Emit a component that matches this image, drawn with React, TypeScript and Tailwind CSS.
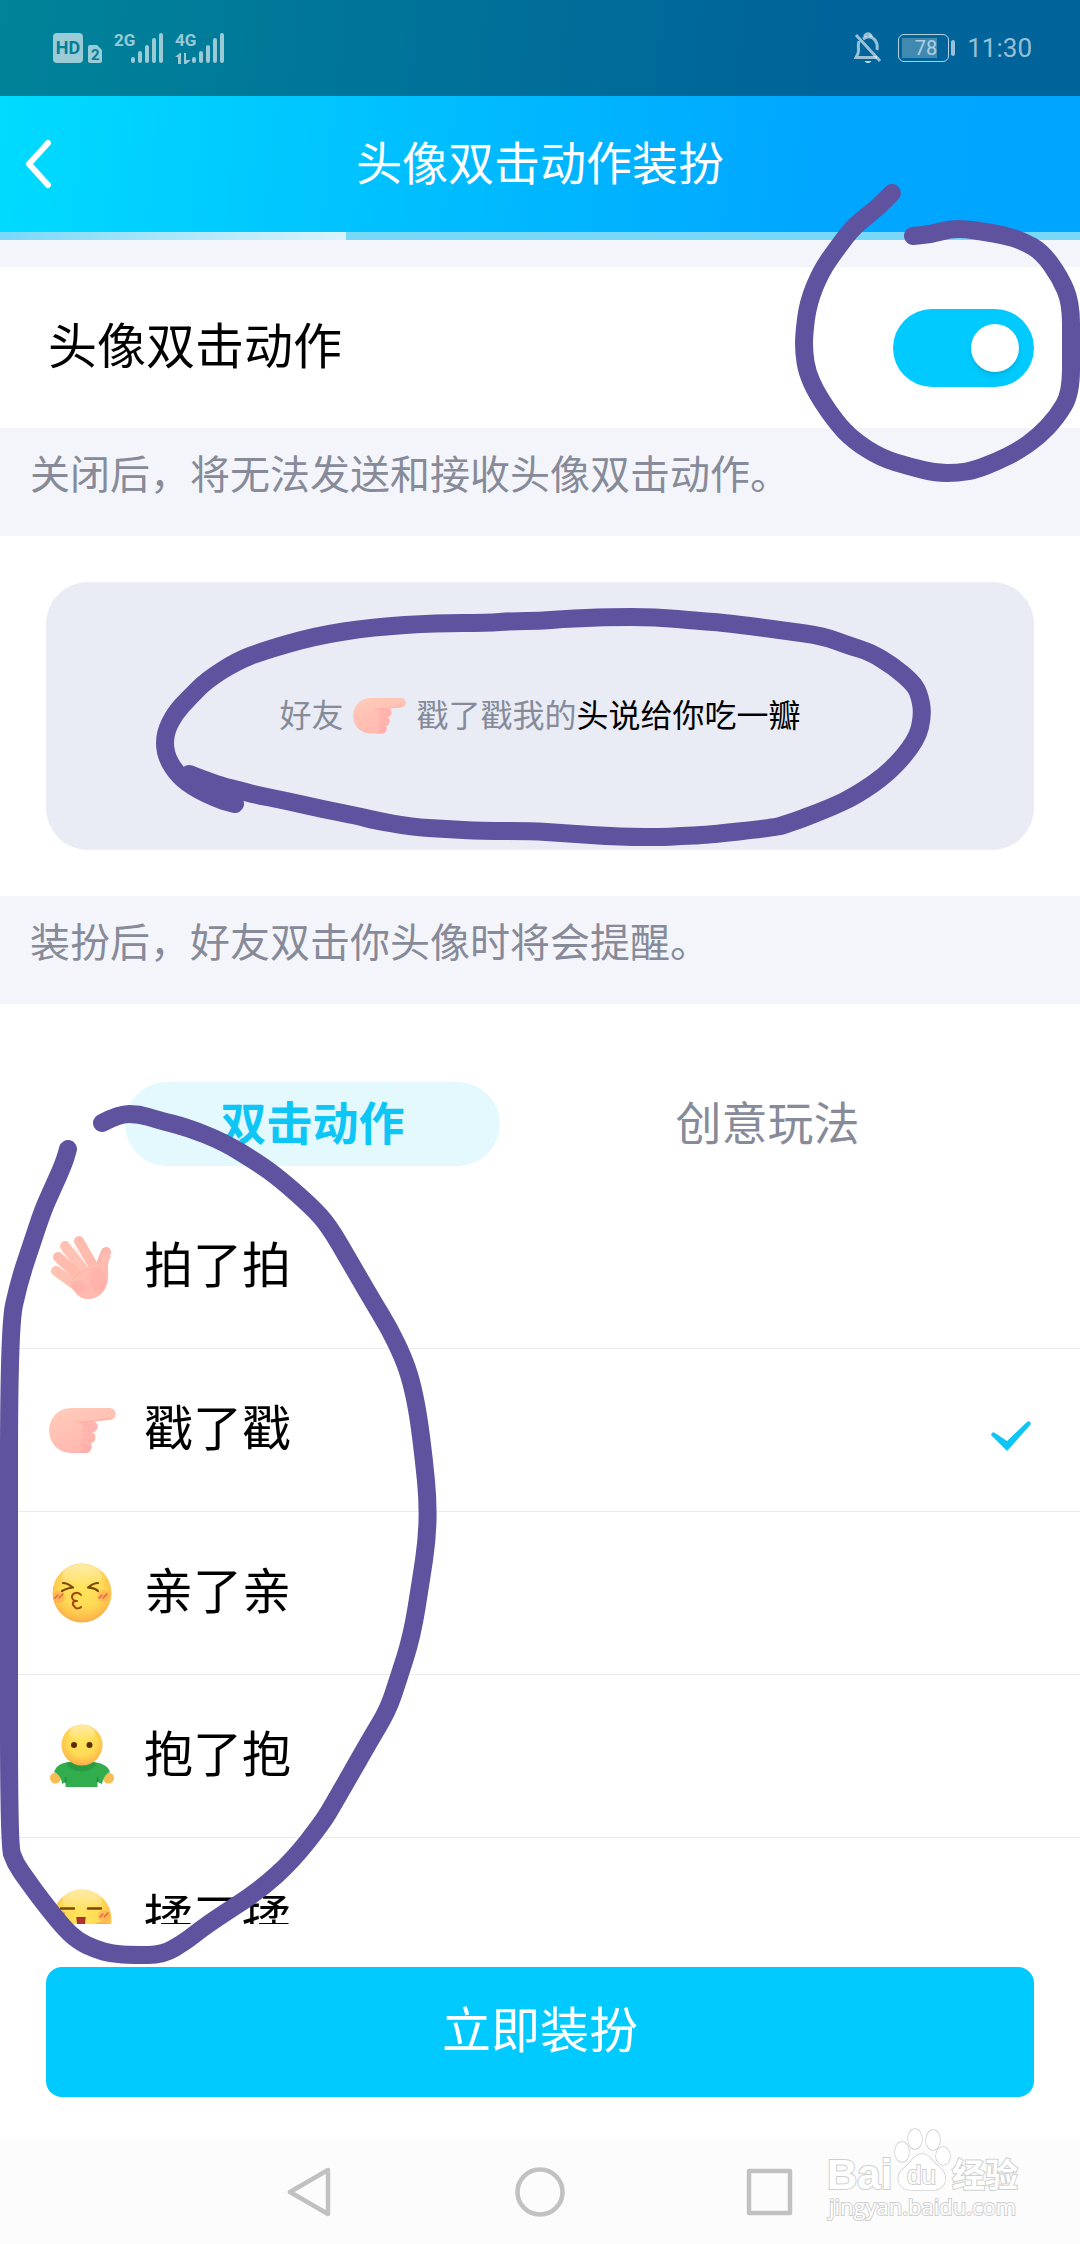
import { FC, ReactNode, useState } from "react";

const WaveHand: FC = () => (
  <svg viewBox="0 0 64 64" className="w-16 h-16" aria-hidden="true">
    <defs>
      <linearGradient id="wave" x1="0" y1="0" x2="1" y2="1">
        <stop offset="0" stopColor="#ffc4b2" />
        <stop offset="0.5" stopColor="#ffbcb0" />
        <stop offset="1" stopColor="#ffb3ac" />
      </linearGradient>
    </defs>
    <g strokeWidth="10" strokeLinecap="round" fill="none">
      <path d="M56 17 50 32" stroke="#fdb4aa" />
      <path d="M29 6 45 34" stroke="#ffbcae" />
      <path d="M15 11 36 38" stroke="#ffc1b1" />
      <path d="M8 22 32 44" stroke="#ffbcae" />
      <path d="M6 36 28 52" stroke="#ffc1b1" />
    </g>
    <path
      d="M20 50C24 41 31 36 41 31L47 30C51 28 51 21 54 16L61 22C56 28 59 36 58 43C57 57 48 64 38 64C29 64 25 58 20 50Z"
      fill="url(#wave)"
    />
    <ellipse cx="29" cy="52" rx="8" ry="6" fill="#ffa79f" opacity="0.4" transform="rotate(30 29 52)" />
    <ellipse cx="48" cy="45" rx="8" ry="12" fill="#ffa79f" opacity="0.3" />
    <path d="M22 45C28 37 34 36 43 34" stroke="#ffa89c" strokeWidth="1" fill="none" opacity="0.6" />
    <path d="M12 16l15 19M7 28l16 15M24 11l12 20" stroke="#ffa89c" strokeWidth="1" opacity="0.4" />
  </svg>
);

const PokeHand: FC<{ className: string }> = ({ className }) => (
  <svg viewBox="0 0 67 45" className={className} aria-hidden="true">
    <defs>
      <linearGradient id="poke" x1="0" y1="0" x2="0.5" y2="1">
        <stop offset="0" stopColor="#ffccb9" />
        <stop offset="1" stopColor="#ffb8b0" />
      </linearGradient>
    </defs>
    <path
      d="M22 0H60.500A6 6 0 0 1 61 12L43 13.500C50 13 51 23 43.500 24.500C48 26 47.500 34 42 35.500C44 38 42 45 37 45H22C-7 44 -7 1 22 0Z"
      fill="url(#poke)"
    />
    <path d="M44 13C50 14 50 23 43 24.500C38 25 34 24 31 23C36 22 34 15 29 13Z" fill="#ffaaa8" opacity="0.55" />
    <path d="M43 25C48 28 46 34 41 35.500C37 36 34 35 31 34C35 32 35 27 30 25Z" fill="#ffaaa8" opacity="0.45" />
    <path d="M41 36C44 40 41 45 37 45H28C34 43 36 39 31 36Z" fill="#ffa5a5" opacity="0.5" />
    <path d="M26 14C35 14 48 13 62 10" stroke="#ffab9f" strokeWidth="1.500" fill="none" opacity="0.5" />
  </svg>
);

const FaceGradient: FC<{ id: string }> = ({ id }) => (
  <defs>
    <radialGradient id={id} cx="0.5" cy="0.4" r="0.62">
      <stop offset="0" stopColor="#ffe45c" />
      <stop offset="0.55" stopColor="#ffdb55" />
      <stop offset="0.85" stopColor="#fdbd4b" />
      <stop offset="1" stopColor="#f9a646" />
    </radialGradient>
    <linearGradient id={`${id}-shine`} x1="0" y1="0" x2="0" y2="1">
      <stop offset="0" stopColor="#fff" stopOpacity="0.5" />
      <stop offset="1" stopColor="#fff" stopOpacity="0" />
    </linearGradient>
  </defs>
);

const KissFace: FC = () => (
  <svg viewBox="0 0 60 60" className="w-15 h-15" aria-hidden="true">
    <FaceGradient id="kiss" />
    <circle cx="30" cy="30" r="29.500" fill="url(#kiss)" />
    <ellipse cx="30" cy="13" rx="20" ry="12" fill="url(#kiss-shine)" />
    <circle cx="7" cy="34" r="6" fill="#fb8f55" opacity="0.35" />
    <circle cx="51" cy="33" r="6" fill="#fb8f55" opacity="0.35" />
    <g fill="none" strokeLinecap="round" strokeLinejoin="round">
      <path d="M11 20C15 20 18 22 21 24.500C17 25 13 26 10 28M46 20C42 20 39 22 36 24.500C40 25 43 25 46 28" stroke="#7a4708" strokeWidth="2.200" />
      <path d="M29 32C26 28 20 30 20 34C20 37 23 38 25 38C20 38 20 41 22 43C24 47 28 45 29 44" stroke="#a5450a" strokeWidth="2" />
      <path d="M3 35l3-3M7 35l4-4M47 35l3-3M51 35l4-4" stroke="#e8553d" strokeWidth="1.200" />
    </g>
  </svg>
);

const HugPerson: FC = () => (
  <svg viewBox="0 0 64 64" className="w-16 h-16" aria-hidden="true">
    <FaceGradient id="hug" />
    <circle cx="5.500" cy="54" r="5.500" fill="#f8bd52" />
    <circle cx="58.500" cy="54" r="5.500" fill="#f8bd52" />
    <path d="M18 38C12 39 8 41 6 44L4 48C9 50 12 55 12 60L15.500 58V63H47.500V58L52 60C53 55 55 50 60 48L58 44C55 41 51 39 44 38Z" fill="#31ad4e" />
    <path d="M15.500 59V53M47.500 58V53" stroke="#1f8f40" strokeWidth="1.500" />
    <path d="M16 40C24 50 39 50 47 40L44 38H19Z" fill="#258f40" opacity="0.6" />
    <circle cx="32" cy="21" r="20.500" fill="url(#hug)" />
    <ellipse cx="32" cy="9" rx="13" ry="8" fill="url(#hug-shine)" />
    <circle cx="24" cy="21" r="3" fill="#5b2b06" />
    <circle cx="39.500" cy="21" r="3" fill="#5b2b06" />
  </svg>
);

const RubFace: FC = () => (
  <svg viewBox="0 0 60 60" className="w-15 h-15" aria-hidden="true">
    <FaceGradient id="rub" />
    <circle cx="30" cy="30" r="29.500" fill="url(#rub)" />
    <ellipse cx="30" cy="12" rx="20" ry="11" fill="url(#rub-shine)" />
    <circle cx="8" cy="27" r="6" fill="#fb8f55" opacity="0.35" />
    <circle cx="52" cy="27" r="6" fill="#fb8f55" opacity="0.35" />
    <path d="M9 19.500H22M36 19.500H49" stroke="#7a4708" strokeWidth="2.400" strokeLinecap="round" />
    <path d="M25 28.500H33L32 38H26Z" fill="#b92f35" stroke="#8a3a14" strokeWidth="1.200" />
    <path d="M4 28l3-3M8 28l4-4M48 28l3-3M52 28l4-4" stroke="#e8553d" strokeWidth="1.200" strokeLinecap="round" />
    <ellipse cx="50" cy="38" rx="9" ry="5" fill="#fbb04a" />
  </svg>
);

const actions: { id: string; name: string; icon: ReactNode }[] = [
  { id: "pat", name: "拍了拍", icon: <WaveHand /> },
  { id: "poke", name: "戳了戳", icon: <PokeHand className="w-[67px]" /> },
  { id: "kiss", name: "亲了亲", icon: <KissFace /> },
  { id: "hug", name: "抱了抱", icon: <HugPerson /> },
  { id: "rub", name: "揉了揉", icon: <RubFace /> },
];

const Signal: FC<{ label: string; data?: boolean }> = ({ label, data }) => (
  <svg viewBox="0 0 52 32" className="h-8 w-[52px] overflow-visible" fill="currentColor">
    <text x="0" y="14" className="font-['Roboto',sans-serif] text-[17px] font-bold">
      {label}
    </text>
    {data && <path d="M0 25l5-4h1v11H3v-7zM9 21h2v7h5l-5 4H9z" />}
    <rect x="17" y="25" width="4" height="6" rx="2" />
    <rect x="24" y="19" width="4" height="12" rx="2" />
    <rect x="31" y="13" width="4" height="18" rx="2" />
    <rect x="38" y="6" width="4" height="25" rx="2" />
    <rect x="45" y="1" width="4" height="30" rx="2" />
  </svg>
);

const StatusBar: FC = () => (
  <div className="h-24 pl-[53px] pr-12 flex items-center justify-between bg-black/40 text-white/60">
    <div className="flex items-center">
      <span className="w-[30px] h-[30px] rounded-sm bg-white/60 text-[#067d97] text-lg font-bold font-['Roboto',sans-serif] flex items-center justify-center">
        HD
      </span>
      <svg viewBox="0 0 14 18" className="w-[14px] h-[18px] ml-[5px] mt-3" fill="currentColor">
        <path d="M2 0H9L14 5V16Q14 18 12 18H2Q0 18 0 16V2Q0 0 2 0Z" />
        <text x="3" y="15" className="font-['Roboto',sans-serif] text-[15px] font-bold" fill="#067d97">
          2
        </text>
      </svg>
      <div className="flex gap-[9px] ml-3">
        <Signal label="2G" />
        <Signal label="4G" data />
      </div>
    </div>
    <div className="flex items-center">
      <svg viewBox="0 0 28 32" className="w-7 h-8" fill="none" stroke="currentColor" strokeWidth="3">
        <path d="M5 9Q4 13 4.500 17Q5 21 2 25.500H23M9 7Q16 2 21 8Q24 12 23 18" />
        <path d="M11 5V3.500Q14 0 17 3.500V5M2 3L26 29" />
        <path d="M11 29.500Q14 32 17 29.500Z" fill="currentColor" strokeWidth="1" />
      </svg>
      <div className="ml-4 w-[51px] h-7 p-[3px] border border-white/70 rounded-md">
        <div className="w-[35px] h-full bg-white/25 text-xl leading-5 text-right">78</div>
      </div>
      <div className="ml-0.5 w-1 h-4 rounded-sm bg-white/60" />
      <time className="ml-3 text-[26px]">11:30</time>
    </div>
  </div>
);

const Header: FC = () => (
  <header className="shrink-0 bg-[linear-gradient(96deg,#00dcff_0%,#00beff_40%,#00a6ff_76%,#00a5ff_100%)]">
    <StatusBar />
    <div className="h-[136px] px-6 grid grid-cols-[1fr_auto_1fr] items-center text-white">
      <button type="button" aria-label="返回" className="w-8">
        <svg viewBox="0 0 32 50" className="w-8" fill="none" stroke="currentColor" strokeWidth="6" strokeLinecap="round" strokeLinejoin="round">
          <path d="M24 4 5 25 24 46" />
        </svg>
      </button>
      <h1 className="text-[46px]">头像双击动作装扮</h1>
    </div>
  </header>
);

const Note: FC<{ children: ReactNode }> = ({ children }) => (
  <p className="h-[108px] shrink-0 px-[30px] pt-5 bg-[#f4f5fa] text-[#878b99] text-[40px] leading-14">
    {children}
  </p>
);

// Points of each pen stroke, in page units.
const strokes: number[][][] = [
  [
    [892, 193], [880, 206], [854, 226], [838, 247], [821, 271], [808, 303], [804, 335], [804, 352], [807, 372], [817, 394],
    [836, 422], [853, 440], [881, 458], [911, 467], [936, 473], [958, 473], [975, 470], [998, 461], [1018, 451], [1038, 437],
    [1057, 417], [1071, 393], [1071, 345], [1071, 303], [1060, 277], [1042, 252], [1023, 241], [1003, 235], [985, 232], [966, 229],
    [950, 229], [932, 234], [913, 236],
  ],
  [
    [189, 774], [217, 785], [235, 789], [252, 794], [287, 801], [322, 809], [358, 816], [373, 820], [412, 827], [445, 829],
    [482, 831], [532, 831], [560, 833], [622, 837], [667, 837], [680, 836], [707, 835], [770, 828], [785, 825], [830, 808],
    [857, 795], [890, 772], [917, 740], [923, 714], [919, 693], [912, 682], [893, 666], [870, 652], [850, 646], [823, 636],
    [787, 631], [727, 623], [700, 621], [655, 617], [608, 617], [587, 618], [562, 619], [540, 621], [513, 621], [487, 623],
    [437, 623], [373, 627], [315, 636], [263, 651], [237, 661], [207, 680], [190, 697], [175, 713], [165, 733], [165, 753],
    [175, 772], [192, 787], [220, 800], [235, 804],
  ],
  [
    [102, 1123], [119, 1114], [139, 1114], [158, 1120], [186, 1127], [224, 1142], [258, 1163], [279, 1178], [312, 1207], [329, 1226],
    [350, 1262], [372, 1300], [389, 1328], [403, 1357], [411, 1380], [418, 1413], [424, 1460], [428, 1502], [427, 1540], [421, 1580],
    [412, 1636], [398, 1680], [388, 1710], [370, 1740], [333, 1805], [322, 1823], [293, 1860], [260, 1890], [217, 1918], [200, 1930],
    [186, 1941], [163, 1955], [133, 1955], [112, 1954], [95, 1949], [78, 1941], [63, 1927], [40, 1898], [27, 1880], [15, 1863],
    [9, 1845], [9, 1600], [9, 1328], [19, 1282], [32, 1243], [43, 1210], [52, 1190], [64, 1163], [68, 1149],
  ],
];

// Runs a curve through the middle of each segment so that the joints stay round.
const toPath = (points: number[][]) => {
  const [first, ...rest] = points;
  const last = rest[rest.length - 1];
  const curve = rest
    .slice(0, -1)
    .map(([x, y], i) => `Q${x} ${y} ${(x + rest[i + 1][0]) / 2} ${(y + rest[i + 1][1]) / 2}`)
    .join("");
  return `M${first[0]} ${first[1]}${curve}L${last[0]} ${last[1]}`;
};

const Doodles: FC = () => (
  <svg
    viewBox="0 0 1080 2244"
    preserveAspectRatio="none"
    className="absolute inset-0 w-full h-full pointer-events-none"
    fill="none"
    stroke="#5f529f"
    strokeWidth="18"
    strokeLinecap="round"
    strokeLinejoin="round"
    aria-hidden="true"
  >
    {strokes.map((points, i) => (
      <path key={i} d={toPath(points)} />
    ))}
  </svg>
);

const Watermark: FC = () => (
  <svg
    viewBox="0 0 200 110"
    className="absolute right-[55px] bottom-[18px] w-[200px] h-[110px] overflow-visible pointer-events-none"
    fill="#fff"
    stroke="#cfcfcf"
    strokeWidth="2"
    paintOrder="stroke"
  >
    <text x="2" y="73" className="font-['Liberation_Sans',sans-serif] text-[42px] font-bold">
      Bai
    </text>
    <g strokeWidth="1.500">
      <ellipse cx="77" cy="36" rx="7" ry="10" />
      <ellipse cx="90" cy="23" rx="7" ry="10" />
      <ellipse cx="108" cy="24" rx="7" ry="10" />
      <ellipse cx="118" cy="40" rx="7" ry="9" />
      <path d="M97 38C105 38 107 46 114 51C124 58 122 74 108 74H87C72 74 70 60 78 53C86 47 89 38 97 38Z" />
    </g>
    <text x="82" y="68" className="font-['Liberation_Sans',sans-serif] text-[26px]">
      du
    </text>
    <text x="127" y="71" className="font-['Noto_Sans_CJK_SC',sans-serif] text-[33px] font-bold">
      经验
    </text>
    <text x="4" y="99" className="font-['Open_Sans',sans-serif] text-[22px]">
      jingyan.baidu.com
    </text>
  </svg>
);

const NavBar: FC = () => (
  <nav className="h-[104px] shrink-0 flex items-center justify-center gap-[180px] bg-[#fcfcfc] text-[#c1c1c1]">
    <button type="button" aria-label="后退">
      <svg viewBox="0 0 50 50" className="w-[50px]" fill="none" stroke="currentColor" strokeWidth="4.500" strokeLinejoin="round">
        <path d="M43 3V47L5 25Z" />
      </svg>
    </button>
    <button type="button" aria-label="主页">
      <svg viewBox="0 0 50 50" className="w-[50px]" fill="none" stroke="currentColor" strokeWidth="4.500">
        <circle cx="25" cy="25" r="22.500" />
      </svg>
    </button>
    <button type="button" aria-label="最近任务">
      <svg viewBox="0 0 50 50" className="w-[50px]" fill="none" stroke="currentColor" strokeWidth="4.500" strokeLinejoin="round">
        <rect x="4" y="4" width="41" height="42" />
      </svg>
    </button>
  </nav>
);

const App: FC = () => {
  const [enabled, setEnabled] = useState(true);
  const [tab, setTab] = useState("action");
  const [selected, setSelected] = useState("poke");

  const tabClass = (id: string) =>
    tab === id
      ? "flex-1 h-[84px] rounded-full bg-[#e3f9fe] text-[#0dc6f6] font-bold"
      : "flex-1 h-[84px] rounded-full text-[#878b99]";

  return (
    <div className="relative h-screen flex flex-col overflow-hidden bg-white text-black font-['Roboto','Noto_Sans_CJK_SC',sans-serif]">
      <Header />
      <div className="h-2 shrink-0 bg-[#78d8f8]" role="progressbar" aria-label="加载中">
        <div className="w-[32%] h-full bg-linear-to-r from-[#78d8f8] to-[#d8f4fb]" />
      </div>
      <div className="h-[27px] shrink-0 bg-[#f4f5fa]" />

      <div className="h-[161px] shrink-0 pl-12 pr-[46px] flex items-center justify-between">
        <label htmlFor="double-tap" className="text-[49px]">
          头像双击动作
        </label>
        <input
          id="double-tap"
          type="checkbox"
          checked={enabled}
          onChange={() => setEnabled(!enabled)}
          className="appearance-none w-[141px] h-[78px] p-[15px] rounded-full flex bg-gray-300 checked:bg-[#00caff] checked:justify-end before:w-12 before:h-12 before:rounded-full before:bg-white before:shadow-md"
        />
      </div>
      <Note>关闭后，将无法发送和接收头像双击动作。</Note>

      <div className="shrink-0 px-[46px] py-[46px]">
        <div className="h-[268px] rounded-[42px] bg-[#e9ecf5] flex items-center justify-center text-[32px] text-[#878b99]">
          <span>好友</span>
          <PokeHand className="w-[53px] mx-2.5" />
          <span>戳了戳我的</span>
          <span className="text-black">头说给你吃一瓣</span>
        </div>
      </div>
      <Note>装扮后，好友双击你头像时将会提醒。</Note>

      <div role="tablist" className="shrink-0 flex gap-20 px-[125px] pt-[78px] pb-5 text-[46px]">
        <button type="button" role="tab" aria-selected={tab === "action"} onClick={() => setTab("action")} className={tabClass("action")}>
          双击动作
        </button>
        <button type="button" role="tab" aria-selected={tab === "creative"} onClick={() => setTab("creative")} className={tabClass("creative")}>
          创意玩法
        </button>
      </div>

      <ul className="flex-1 min-h-0 overflow-y-auto [scrollbar-width:none]">
        {actions.map(({ id, name, icon }) => (
          <li key={id} className="border-b border-[#ebebeb]">
            <label className="relative h-[162px] pl-12 pr-12 flex items-center">
              <input type="radio" name="action" checked={selected === id} onChange={() => setSelected(id)} className="sr-only" />
              <span className="w-[68px] flex justify-center">{icon}</span>
              <span className="ml-7 flex-1 text-[49px]">{name}</span>
              {selected === id && (
                <svg viewBox="0 0 42 42" className="w-[42px]" aria-hidden="true">
                  <path d="M1 26Q2 22 5 24L17 32L37 13Q40 11 41 15L17 42Z" fill="#0dc6f6" />
                </svg>
              )}
            </label>
          </li>
        ))}
      </ul>

      <div className="shrink-0 px-[46px] py-[43px]">
        <button type="button" className="w-full h-[130px] rounded-2xl bg-[#00caff] text-white text-[49px]">
          立即装扮
        </button>
      </div>
      <NavBar />
      <Doodles />
      <Watermark />
    </div>
  );
};

export default App;
